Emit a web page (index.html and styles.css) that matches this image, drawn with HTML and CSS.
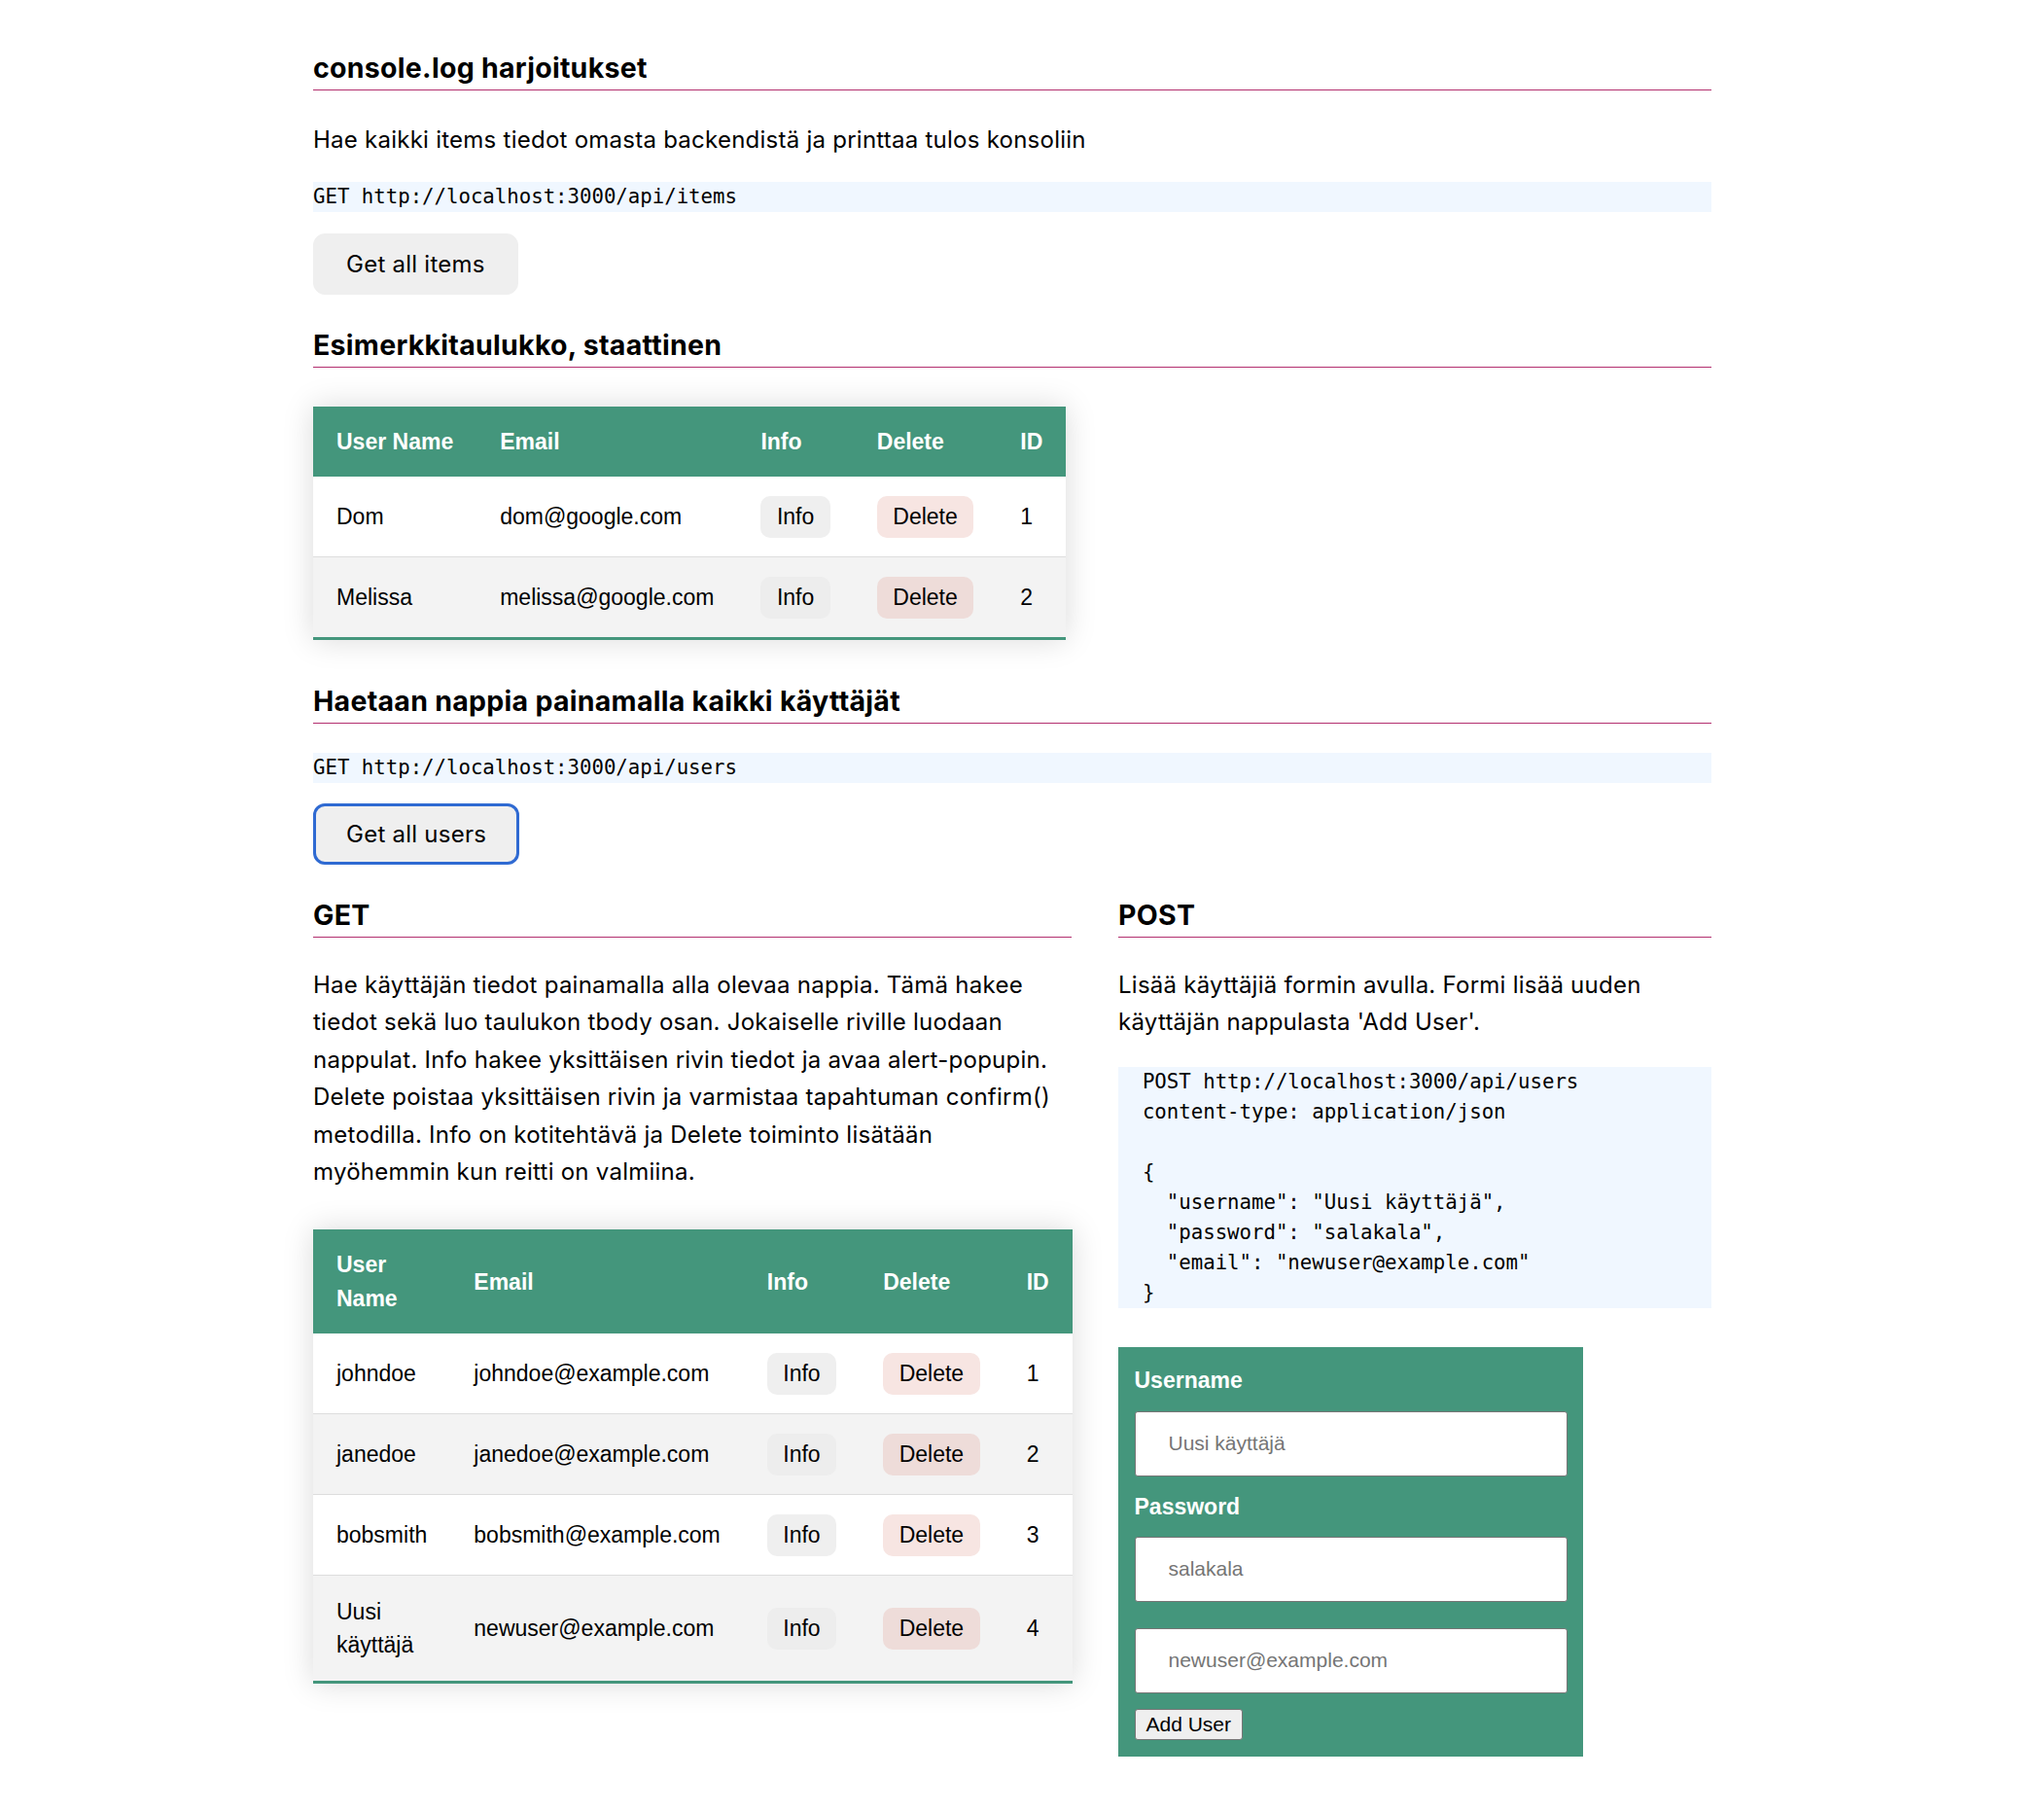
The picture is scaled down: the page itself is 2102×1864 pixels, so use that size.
FILE: index.html
```html
<!DOCTYPE html>
<html lang="fi">
<head>
<meta charset="utf-8">
<title>console.log harjoitukset</title>
<link rel="stylesheet" href="styles.css">
</head>
<body>
<main class="page">
  <h2 class="title">console.log harjoitukset</h2>
  <p class="lead">Hae kaikki items tiedot omasta backendistä ja printtaa tulos konsoliin</p>
  <code class="endpoint">GET http://localhost:3000/api/items</code>
  <button class="big" type="button">Get all items</button>

  <h2 class="title after-button">Esimerkkitaulukko, staattinen</h2>
  <table class="styled-table first-table">
    <thead>
      <tr><th>User Name</th><th>Email</th><th>Info</th><th>Delete</th><th>ID</th></tr>
    </thead>
    <tbody>
      <tr><td>Dom</td><td>dom@google.com</td><td><button class="info">Info</button></td><td><button class="del">Delete</button></td><td>1</td></tr>
      <tr><td>Melissa</td><td>melissa@google.com</td><td><button class="info">Info</button></td><td><button class="del">Delete</button></td><td>2</td></tr>
    </tbody>
  </table>

  <h2 class="title after-table">Haetaan nappia painamalla kaikki käyttäjät</h2>
  <code class="endpoint after-title">GET http://localhost:3000/api/users</code>
  <button class="big focused after-code" type="button">Get all users</button>

  <div class="cols">
    <section class="col">
      <h2 class="title">GET</h2>
      <p class="text">Hae käyttäjän tiedot painamalla alla olevaa nappia. Tämä hakee tiedot sekä luo taulukon tbody osan. Jokaiselle riville luodaan nappulat. Info hakee yksittäisen rivin tiedot ja avaa alert-popupin. Delete poistaa yksittäisen rivin ja varmistaa tapahtuman confirm() metodilla. Info on kotitehtävä ja Delete toiminto lisätään myöhemmin kun reitti on valmiina.</p>
      <table class="styled-table full">
        <thead>
          <tr><th>User Name</th><th>Email</th><th>Info</th><th>Delete</th><th>ID</th></tr>
        </thead>
        <tbody>
          <tr><td>johndoe</td><td>johndoe@example.com</td><td><button class="info">Info</button></td><td><button class="del">Delete</button></td><td>1</td></tr>
          <tr><td>janedoe</td><td>janedoe@example.com</td><td><button class="info">Info</button></td><td><button class="del">Delete</button></td><td>2</td></tr>
          <tr><td>bobsmith</td><td>bobsmith@example.com</td><td><button class="info">Info</button></td><td><button class="del">Delete</button></td><td>3</td></tr>
          <tr><td>Uusi käyttäjä</td><td>newuser@example.com</td><td><button class="info">Info</button></td><td><button class="del">Delete</button></td><td>4</td></tr>
        </tbody>
      </table>
    </section>
    <section class="col">
      <h2 class="title">POST</h2>
      <p class="text">Lisää käyttäjiä formin avulla. Formi lisää uuden käyttäjän nappulasta 'Add User'.</p>
<pre class="request">  POST http://localhost:3000/api/users
  content-type: application/json

  {
    "username": "Uusi käyttäjä",
    "password": "salakala",
    "email": "newuser@example.com"
  }</pre>
      <form class="user-form">
        <label class="label" for="username">Username</label>
        <input class="field" id="username" type="text" placeholder="Uusi käyttäjä">
        <label class="label second" for="password">Password</label>
        <input class="field" id="password" type="text" placeholder="salakala">
        <input class="field email" id="email" type="text" placeholder="newuser@example.com">
        <button class="add" type="button">Add User</button>
      </form>
    </section>
  </div>
</main>
</body>
</html>
```
FILE: styles.css
```css
html, body {
  margin: 0;
  padding: 0;
  background: #ffffff;
}

body {
  font-family: Inter, "Noto Sans", sans-serif;
  font-size: 24px;
  color: #000;
}

.page {
  margin-left: 322px;
  width: 1438px;
  padding-top: 53px;
  padding-bottom: 40px;
}

.title {
  margin: 0;
  font-family: Inter, "Noto Sans", sans-serif;
  font-weight: 700;
  font-size: 28.5px;
  letter-spacing: 0.28px;
  line-height: 34px;
  padding-bottom: 5px;
  border-bottom: 1px solid #b3306f;
}

.title.after-button { margin-top: 35px; }
.title.after-table { margin-top: 46px; }

.lead {
  margin: 32px 0 0;
  font-size: 24px;
  letter-spacing: 0.25px;
  line-height: 38.4px;
}

.endpoint {
  display: block;
  margin-top: 24px;
  font-family: "DejaVu Sans Mono", "Liberation Mono", monospace;
  font-size: 20.7px;
  line-height: 30.5px;
  background: #f0f7ff;
  white-space: pre;
}

.endpoint.after-title { margin-top: 30px; }

.big {
  display: block;
  margin-top: 22px;
  height: 63px;
  box-sizing: border-box;
  padding: 0 33px;
  font-family: Inter, "Noto Sans", sans-serif;
  font-size: 24px;
  letter-spacing: 0.25px;
  color: #000;
  background: #efefef;
  border: 1px solid #efefef;
  border-radius: 12px;
}

.big.after-code { margin-top: 21px; }

.big.focused {
  border: 3px solid #2f6ad2;
  padding: 0 31px;
}

/* tables */
.styled-table {
  margin-top: 40px;
  border-collapse: collapse;
  font-family: "Liberation Sans", Arial, sans-serif;
  font-size: 23px;
  line-height: 34.5px;
  box-shadow: 0 0 30px rgba(0, 0, 0, 0.15);
  text-align: left;
}

.styled-table.full { width: 100%; }

.styled-table thead tr {
  background: #44967c;
  color: #fff;
}

.styled-table th {
  font-weight: 700;
  padding: 19px 24px;
}

.styled-table td {
  padding: 19.5px 24px;
  vertical-align: middle;
}

.styled-table tbody tr {
  border-bottom: 1px solid #dddddd;
}

.styled-table tbody tr:nth-of-type(even) {
  background: #f3f3f3;
}

.styled-table tbody tr:last-of-type {
  border-bottom: 3px solid #44967c;
}

.info,
.del {
  display: block;
  height: 43px;
  padding: 0 16.5px;
  border: none;
  border-radius: 10px;
  font-family: "Liberation Sans", Arial, sans-serif;
  font-size: 23px;
  color: #000;
}

.info { background: #efefef; }
.del { background: #f7e5e2; }

.styled-table tbody tr:nth-of-type(even) .info { background: #ededed; }
.styled-table tbody tr:nth-of-type(even) .del { background: #eedcd9; }

/* columns */
.cols {
  display: grid;
  grid-template-columns: 780px 610px;
  column-gap: 48px;
  align-items: start;
  margin-top: 35px;
}

.text {
  margin: 30px 0 0;
  font-size: 24px;
  letter-spacing: 0.25px;
  line-height: 38.4px;
}

.request {
  margin: 26px 0 0;
  font-family: "DejaVu Sans Mono", "Liberation Mono", monospace;
  font-size: 20.7px;
  line-height: 31px;
  background: #f0f7ff;
}

/* form */
.user-form {
  margin-top: 40px;
  width: 478px;
  box-sizing: border-box;
  padding: 16px 16.5px 17px;
  background: #44967c;
  display: flex;
  flex-direction: column;
  align-items: flex-start;
}

.label {
  font-family: "Liberation Sans", Arial, sans-serif;
  font-weight: 700;
  font-size: 23px;
  line-height: 36px;
  color: #fff;
}

.label.second { margin-top: 13px; }

.field {
  margin-top: 14px;
  width: 100%;
  height: 67px;
  box-sizing: border-box;
  padding: 0 0 0 34px;
  border: 1px solid #767676;
  border-radius: 3px;
  background: #fff;
  font-family: "Liberation Sans", Arial, sans-serif;
  font-size: 21px;
}

.label.second + .field { margin-top: 13px; }
.field.email { margin-top: 27px; }

.field::placeholder {
  color: #757575;
}

.add {
  margin-top: 16px;
  height: 32px;
  padding: 0 11px;
  box-sizing: border-box;
  border: 1px solid #767676;
  border-radius: 3px;
  background: #efefef;
  font-family: "Liberation Sans", Arial, sans-serif;
  font-size: 21px;
  color: #000;
}
```
